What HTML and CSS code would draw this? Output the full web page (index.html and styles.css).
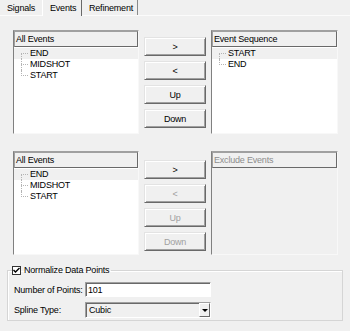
FILE: index.html
```html
<!DOCTYPE html>
<html lang="en">
<head>
    <meta charset="UTF-8">
    <title>Events</title>
    <link rel="stylesheet" href="styles.css">
</head>
<body>
    <div class="tabs">
        <span class="tab tab-signals">Signals</span>
        <span class="tab tab-events active">Events</span>
        <span class="tab tab-refine">Refinement</span>
    </div>
    <div class="page">
        <div class="pair first">
            <div class="list">
                <div class="list-head">All Events</div>
                <ul class="tree">
                    <li class="sel">END</li>
                    <li>MIDSHOT</li>
                    <li>START</li>
                </ul>
            </div>
            <div class="buttons">
                <button class="btn">&gt;</button>
                <button class="btn">&lt;</button>
                <button class="btn">Up</button>
                <button class="btn">Down</button>
            </div>
            <div class="list wide">
                <div class="list-head">Event Sequence</div>
                <ul class="tree">
                    <li class="sel">START</li>
                    <li>END</li>
                </ul>
            </div>
        </div>
        <div class="pair second">
            <div class="list">
                <div class="list-head">All Events</div>
                <ul class="tree">
                    <li class="sel">END</li>
                    <li>MIDSHOT</li>
                    <li>START</li>
                </ul>
            </div>
            <div class="buttons">
                <button class="btn">&gt;</button>
                <button class="btn" disabled>&lt;</button>
                <button class="btn" disabled>Up</button>
                <button class="btn" disabled>Down</button>
            </div>
            <div class="list wide disabled">
                <div class="list-head">Exclude Events</div>
            </div>
        </div>
        <fieldset class="group">
            <legend><span class="check"><svg width="7" height="7" viewBox="0 0 7 7"><path d="M0.5 3 L2.5 5 L6.5 1" fill="none" stroke="#000" stroke-width="1.4"/></svg></span>Normalize Data Points</legend>
            <div class="form-grid">
                <label for="points">Number of Points:</label>
                <input type="text" id="points" value="101">
                <label>Spline Type:</label>
                <div class="combo">
                    <span>Cubic</span>
                    <span class="arrow"></span>
                </div>
            </div>
        </fieldset>
    </div>
</body>
</html>
```

FILE: styles.css
```css
body {
    margin: 0;
    width: 350px;
    height: 331px;
    overflow: hidden;
    background-color: #f0f0f0;
    font-family: "Liberation Sans", Arial, sans-serif;
    font-size: 9px;
    letter-spacing: -0.2px;
    color: #000;
}
.tabs {
    display: flex;
    height: 15px;
    border-bottom: 1px solid #fbfbfb;
}
.tab {
    box-sizing: border-box;
    height: 15px;
    padding: 3px 0 0 7px;
    line-height: 11px;
}
.tab-signals {
    width: 42px;
}
.tab-events {
    width: 40px;
}
.tab-refine {
    width: 56px;
    border-right: 1px solid #8a8a8a;
}
.tab.active {
    height: 16px;
    border-left: 1px solid #fff;
    border-right: 1px solid #696969;
    background-color: #f0f0f0;
}
.page {
    padding-top: 14px;
}
.pair {
    display: flex;
    margin-left: 13px;
}
.second {
    margin-top: 17px;
}
.list {
    box-sizing: border-box;
    width: 126px;
    height: 104px;
    background-color: #fff;
    border: 1px solid;
    border-color: #a0a0a0 #f8f8f8 #f8f8f8 #808080;
}
.list.wide {
    width: 127px;
}
.list.disabled {
    background-color: #f0f0f0;
    color: #8d8d8d;
}
.list-head {
    box-sizing: border-box;
    height: 16px;
    padding-left: 1px;
    line-height: 14px;
    background-color: #f0f0f0;
    border: 1px solid;
    border-color: #a0a0a0 #696969 #696969 #a0a0a0;
}
.tree {
    list-style: none;
    margin: 0;
    padding: 1px 0 0 0;
}
.tree li {
    position: relative;
    height: 11px;
    line-height: 11px;
    padding-left: 16px;
}
.tree li.sel {
    background-color: #f0f0f0;
}
.tree li::before {
    content: '';
    position: absolute;
    left: 7px;
    top: 5px;
    width: 7px;
    border-top: 1px dotted #b4b4b4;
}
.tree li::after {
    content: '';
    position: absolute;
    left: 7px;
    top: 0;
    bottom: 0;
    border-left: 1px dotted #b4b4b4;
}
.tree li:first-child::after {
    top: 5px;
}
.tree li:last-child::after {
    bottom: 5px;
}
.buttons {
    display: flex;
    flex-direction: column;
    gap: 5px;
    width: 62px;
    margin: 0 5px;
    padding-top: 7px;
}
.second .buttons {
    padding-top: 9px;
}
.btn {
    box-sizing: border-box;
    height: 19px;
    padding: 0;
    font: inherit;
    letter-spacing: inherit;
    color: #000;
    background-color: #f0f0f0;
    border: 1px solid;
    border-color: #e3e3e3 #696969 #696969 #e3e3e3;
    box-shadow: inset 1px 1px #fff, inset -1px -1px #a0a0a0;
}
.btn:disabled {
    color: #a0a0a0;
}
.group {
    margin: 10px 7px 0 7px;
    padding: 6px 0 2px 6px;
    border: 1px solid #d5d5d5;
    box-shadow: inset 1px 1px #fff;
}
.group legend {
    display: flex;
    align-items: center;
    margin-left: -2px;
    padding: 0 2px 0 0;
    line-height: 11px;
}
.check {
    display: flex;
    align-items: center;
    justify-content: center;
    box-sizing: border-box;
    width: 9px;
    height: 9px;
    margin-right: 3px;
    background-color: #fff;
    border: 1px solid #333;
}
.form-grid {
    display: grid;
    grid-template-columns: 71px 126px;
    row-gap: 5px;
    align-items: center;
}
.form-grid input {
    box-sizing: border-box;
    height: 15px;
    margin: 0;
    padding: 0 2px;
    font: inherit;
    letter-spacing: inherit;
    background-color: #fff;
    border: 1px solid;
    border-color: #a0a0a0 #fff #fff #a0a0a0;
    box-shadow: inset 1px 1px #696969;
    outline: none;
}
.combo {
    display: flex;
    align-items: center;
    justify-content: space-between;
    box-sizing: border-box;
    height: 16px;
    padding-left: 3px;
    background-color: #f0f0f0;
    border: 1px solid;
    border-color: #a0a0a0 #fff #fff #a0a0a0;
    box-shadow: inset 1px 1px #696969;
}
.arrow {
    position: relative;
    box-sizing: border-box;
    width: 11px;
    height: 14px;
    border: 1px solid;
    border-color: #fff #696969 #696969 #fff;
}
.arrow::after {
    content: '';
    position: absolute;
    left: 2px;
    top: 5px;
    border-left: 3px solid transparent;
    border-right: 3px solid transparent;
    border-top: 3px solid #000;
}
```
